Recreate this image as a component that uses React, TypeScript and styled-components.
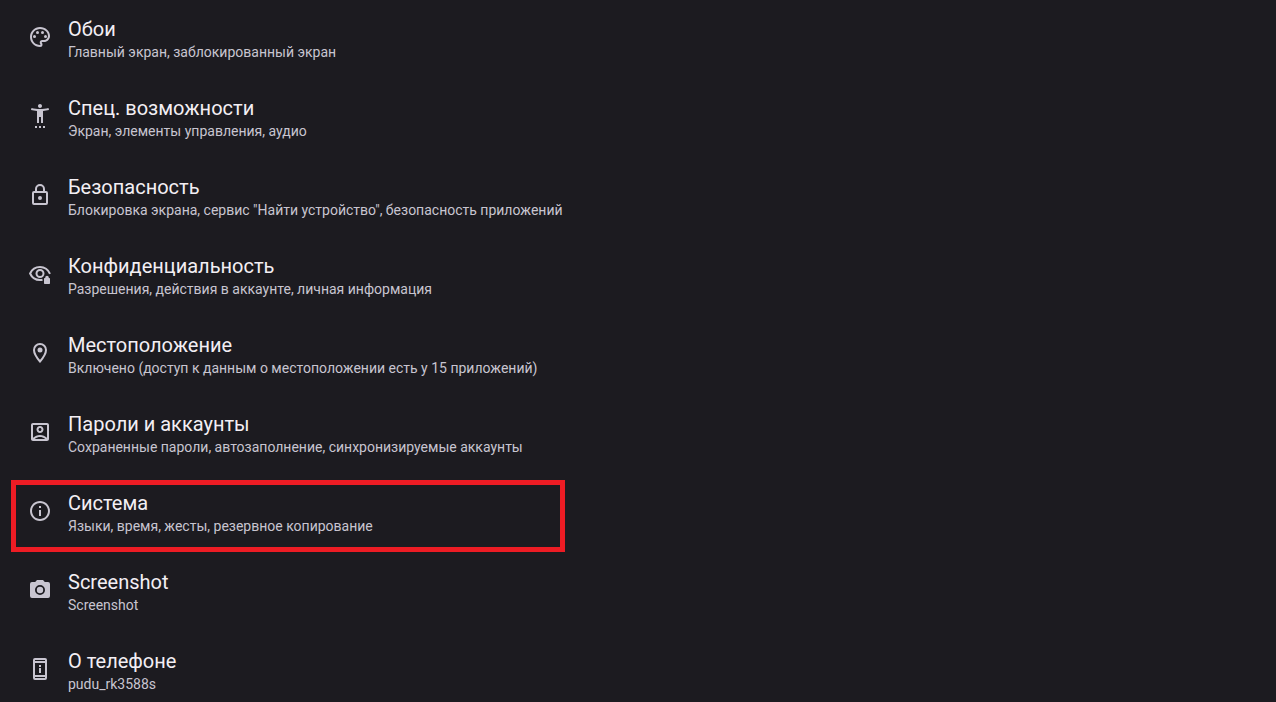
import React from 'react';
import styled, { createGlobalStyle } from 'styled-components';
import { MdOutlinePalette, MdSettingsAccessibility, MdOutlineAccountBox, MdInfoOutline } from 'react-icons/md';

const GlobalStyle = createGlobalStyle`
  body {
    margin: 0;
    background: #1c1b20;
    font-family: Roboto, "Noto Sans", sans-serif;
  }
`;

const Page = styled.main`
  height: 100vh;
  overflow: hidden;
  padding: 6px 11px 0;
  box-sizing: border-box;
`;

const List = styled.ul`
  list-style: none;
  margin: 0;
  padding: 0;
  display: flex;
  flex-direction: column;
  gap: 7px;
`;

const Item = styled.li<{ $marked?: boolean }>`
  display: flex;
  box-sizing: border-box;
  min-height: 72px;
  width: 100%;
  max-width: 554px;
  border: 5px solid ${(p) => (p.$marked ? '#ed1c24' : 'transparent')};
`;

const Row = styled.a`
  flex: 1;
  display: flex;
  gap: 16px;
  padding: 6px 0 0 12px;
  color: inherit;
  text-decoration: none;
  white-space: nowrap;
`;

const IconBox = styled.span`
  display: flex;
  padding-top: 8px;
  height: 24px;
  color: #c8c5d0;

  svg {
    width: 24px;
    height: 24px;
  }
`;

const Labels = styled.span`
  display: flex;
  flex-direction: column;
`;

const Title = styled.span`
  color: #f3eff4;
  font-size: 20px;
  line-height: 24px;
`;

const Summary = styled.span`
  color: #c8c5d0;
  font-size: 14px;
  line-height: 22px;
`;

const LockIcon = () => (
  <svg viewBox="0 0 24 24" fill="none" stroke="currentColor" strokeWidth="2" aria-hidden="true">
    <rect x="5" y="9" width="14" height="12" rx="1" />
    <path d="M8 9V6a4 4 0 0 1 8 0v3" />
    <circle cx="12" cy="15" r="2" fill="currentColor" stroke="none" />
  </svg>
);

const PrivacyIcon = () => (
  <svg viewBox="0 0 24 24" fill="none" stroke="currentColor" strokeWidth="2" aria-hidden="true">
    <path d="M14.500 17.700C13.700 17.900 12.900 18 12 18C7.700 18 3.900 15.500 2.100 11.500C3.900 7.500 7.700 5 12 5C16.300 5 20.100 7.500 22 11.900" />
    <circle cx="12" cy="11.500" r="3.500" />
    <path d="M16.700 16H17.200V15.500a1.800 1.800 0 0 1 3.600 0V16H21.300q.7 0 .7.700V21.300q0 .7-.7.700H16.700q-.7 0-.7-.7V16.700q0-.7.700-.7z" fill="currentColor" stroke="none" />
  </svg>
);

const LocationIcon = () => (
  <svg viewBox="0 0 24 24" fill="none" stroke="currentColor" strokeWidth="2" aria-hidden="true">
    <path d="M12 20.500C9 17 6 12.700 6 9a6 6 0 0 1 12 0C18 12.700 15 17 12 20.500z" />
    <circle cx="12" cy="9" r="2.500" fill="currentColor" stroke="none" />
  </svg>
);

const CameraIcon = () => (
  <svg viewBox="0 0 24 24" fill="currentColor" fillRule="evenodd" aria-hidden="true">
    <path d="M9 2L7.200 4H4Q2 4 2 6V18Q2 20 4 20H20Q22 20 22 18V6Q22 4 20 4H16.800L15 2zM12 7a5 5 0 1 0 0 10a5 5 0 1 0 0-10z" />
    <circle cx="12" cy="12" r="3.200" />
  </svg>
);

const PhoneInfoIcon = () => (
  <svg viewBox="0 0 24 24" fill="none" stroke="currentColor" strokeWidth="2" aria-hidden="true">
    <rect x="6" y="2" width="12" height="20" rx="1" />
    <path d="M6 5h12M6 19h12" />
    <path d="M12 11v5M12 8v2" />
  </svg>
);

const items = [
  { icon: MdOutlinePalette, title: 'Обои', summary: 'Главный экран, заблокированный экран' },
  { icon: MdSettingsAccessibility, title: 'Спец. возможности', summary: 'Экран, элементы управления, аудио' },
  { icon: LockIcon, title: 'Безопасность', summary: 'Блокировка экрана, сервис "Найти устройство", безопасность приложений' },
  { icon: PrivacyIcon, title: 'Конфиденциальность', summary: 'Разрешения, действия в аккаунте, личная информация' },
  { icon: LocationIcon, title: 'Местоположение', summary: 'Включено (доступ к данным о местоположении есть у 15 приложений)' },
  { icon: MdOutlineAccountBox, title: 'Пароли и аккаунты', summary: 'Сохраненные пароли, автозаполнение, синхронизируемые аккаунты' },
  { icon: MdInfoOutline, title: 'Система', summary: 'Языки, время, жесты, резервное копирование', marked: true },
  { icon: CameraIcon, title: 'Screenshot', summary: 'Screenshot' },
  { icon: PhoneInfoIcon, title: 'О телефоне', summary: 'pudu_rk3588s' },
];

export default function App() {
  return (
    <>
      <GlobalStyle />
      <Page>
        <List>
          {items.map(({ icon: Icon, title, summary, marked }) => (
            <Item key={title} $marked={marked}>
              <Row href="#">
                <IconBox><Icon /></IconBox>
                <Labels>
                  <Title>{title}</Title>
                  <Summary>{summary}</Summary>
                </Labels>
              </Row>
            </Item>
          ))}
        </List>
      </Page>
    </>
  );
}
